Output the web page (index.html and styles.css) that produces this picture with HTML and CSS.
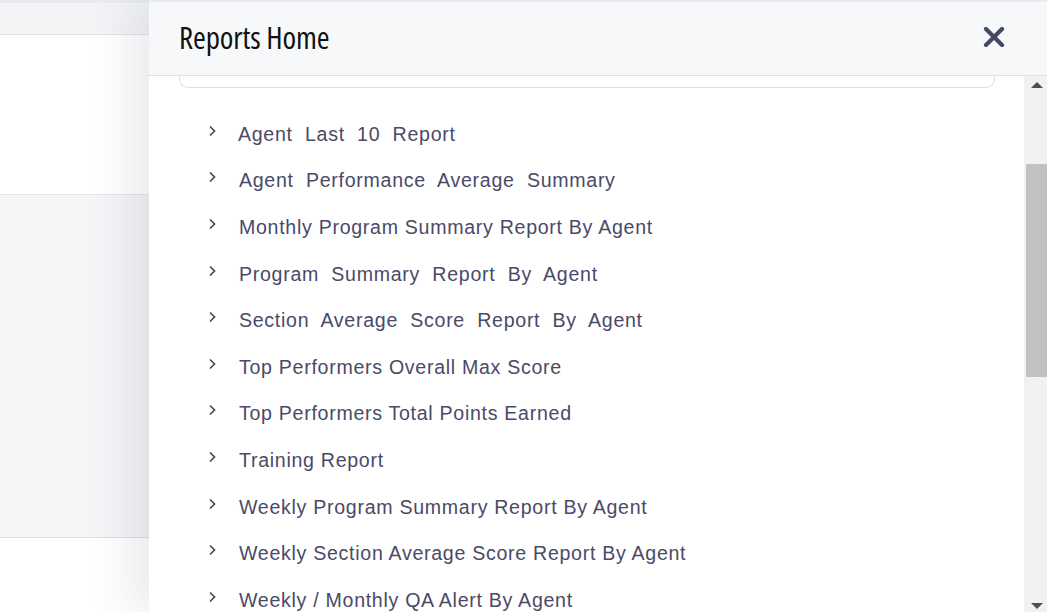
FILE: index.html
```html
<!DOCTYPE html>
<html>
<head>
<meta charset="utf-8">
<link rel="stylesheet" href="styles.css">
</head>
<body>
<div class="page">
  <div class="page-top"></div>
  <div class="page-card"></div>
  <div class="page-band"></div>
  <div class="page-foot"></div>
</div>
<div class="drawer">
  <div class="drawer-strip"></div>
  <div class="drawer-header">
    <h1 class="drawer-title">Reports Home</h1>
    <svg class="close" width="22" height="20" viewBox="0 0 22 20"><path d="M3 2 L19 18 M19 2 L3 18" stroke="#474766" stroke-width="4.2" stroke-linecap="round"/></svg>
  </div>
  <div class="drawer-body">
    <div class="content">
      <div class="card-edge"></div>
      <ul class="report-list">
        <li><svg class="chev" viewBox="0 0 9 12"><path d="M2 1.5 L6.5 6 L2 10.5" fill="none" stroke="#4a4a4a" stroke-width="1.7"/></svg><span class="label tight">Agent&nbsp; Last&nbsp; 10&nbsp; Report</span></li>
        <li><svg class="chev" viewBox="0 0 9 12"><path d="M2 1.5 L6.5 6 L2 10.5" fill="none" stroke="#4a4a4a" stroke-width="1.7"/></svg><span class="label">Agent&nbsp; Performance&nbsp; Average&nbsp; Summary</span></li>
        <li><svg class="chev" viewBox="0 0 9 12"><path d="M2 1.5 L6.5 6 L2 10.5" fill="none" stroke="#4a4a4a" stroke-width="1.7"/></svg><span class="label">Monthly Program Summary Report By Agent</span></li>
        <li><svg class="chev" viewBox="0 0 9 12"><path d="M2 1.5 L6.5 6 L2 10.5" fill="none" stroke="#4a4a4a" stroke-width="1.7"/></svg><span class="label">Program&nbsp; Summary&nbsp; Report&nbsp; By&nbsp; Agent</span></li>
        <li><svg class="chev" viewBox="0 0 9 12"><path d="M2 1.5 L6.5 6 L2 10.5" fill="none" stroke="#4a4a4a" stroke-width="1.7"/></svg><span class="label">Section&nbsp; Average&nbsp; Score&nbsp; Report&nbsp; By&nbsp; Agent</span></li>
        <li><svg class="chev" viewBox="0 0 9 12"><path d="M2 1.5 L6.5 6 L2 10.5" fill="none" stroke="#4a4a4a" stroke-width="1.7"/></svg><span class="label">Top Performers Overall Max Score</span></li>
        <li><svg class="chev" viewBox="0 0 9 12"><path d="M2 1.5 L6.5 6 L2 10.5" fill="none" stroke="#4a4a4a" stroke-width="1.7"/></svg><span class="label">Top Performers Total Points Earned</span></li>
        <li><svg class="chev" viewBox="0 0 9 12"><path d="M2 1.5 L6.5 6 L2 10.5" fill="none" stroke="#4a4a4a" stroke-width="1.7"/></svg><span class="label">Training Report</span></li>
        <li><svg class="chev" viewBox="0 0 9 12"><path d="M2 1.5 L6.5 6 L2 10.5" fill="none" stroke="#4a4a4a" stroke-width="1.7"/></svg><span class="label">Weekly Program Summary Report By Agent</span></li>
        <li><svg class="chev" viewBox="0 0 9 12"><path d="M2 1.5 L6.5 6 L2 10.5" fill="none" stroke="#4a4a4a" stroke-width="1.7"/></svg><span class="label">Weekly Section Average Score Report By Agent</span></li>
        <li><svg class="chev" viewBox="0 0 9 12"><path d="M2 1.5 L6.5 6 L2 10.5" fill="none" stroke="#4a4a4a" stroke-width="1.7"/></svg><span class="label">Weekly / Monthly QA Alert By Agent</span></li>
      </ul>
    </div>
    <div class="scrollbar">
      <div class="sb-arrow up"></div>
      <div class="sb-track">
        <div class="sb-gap-top"></div>
        <div class="sb-thumb"></div>
      </div>
      <div class="sb-arrow down"></div>
    </div>
  </div>
</div>
</body>
</html>
```

FILE: styles.css
```css
* { box-sizing: border-box; }
html, body { margin: 0; padding: 0; }
body {
  width: 1047px;
  height: 612px;
  overflow: hidden;
  display: flex;
  background: #f4f5f7;
  font-family: "Liberation Sans", Arial, sans-serif;
}
.page {
  width: 149px;
  flex: none;
  display: flex;
  flex-direction: column;
  background: #f4f5f7;
}
.page-top {
  height: 35px;
  background: #f3f4f6;
  border-bottom: 1px solid #e1e4e8;
  border-top: 3px solid #e9ebee;
}
.page-card {
  height: 160px;
  background: #fff;
  border-bottom: 1px solid #e3e5e8;
}
.page-band {
  height: 343px;
  background: #f4f5f7;
  border-bottom: 1px solid #dadde1;
}
.page-foot {
  flex: 1;
  background: #fff;
}
.drawer {
  flex: 1;
  display: flex;
  flex-direction: column;
  background: #fff;
  box-shadow: -20px 0 40px rgba(60, 70, 90, 0.11);
  position: relative;
}
.drawer-strip {
  height: 2px;
  background: #e9ebee;
}
.drawer-header {
  height: 74px;
  background: #f7f8fa;
  border-bottom: 1px solid #dde0e4;
  display: flex;
  align-items: center;
  justify-content: space-between;
  padding: 0 42px 0 30px;
}
.drawer-title {
  margin: 0;
  font-family: "Open Sans", sans-serif;
  font-stretch: 75%;
  font-weight: 400;
  font-size: 31px;
  color: #111;
  letter-spacing: -0.1px;
  display: inline-block;
  margin-top: -4px;
}
.close { display: block; margin-top: -3px; }
.drawer-body {
  flex: 1;
  display: flex;
  min-height: 0;
}
.content {
  flex: 1;
  padding: 0 29px 0 30px;
}
.card-edge {
  height: 12px;
  border: 1px solid #dcdfe3;
  border-top: none;
  border-radius: 0 0 9px 9px;
}
.report-list {
  list-style: none;
  margin: 0;
  padding: 23px 0 0 29px;
}
.report-list li {
  height: 46.6px;
  display: flex;
  align-items: center;
  color: #4a4a68;
  font-size: 19.6px;
  letter-spacing: 0.7px;
  white-space: nowrap;
}
.chev {
  width: 9px;
  height: 12px;
  flex: none;
  margin: -7px 22px 0 0;
}
.label.tight { margin-left: -1px; }
.scrollbar {
  width: 23px;
  flex: none;
  background: #f1f1f1;
  display: flex;
  flex-direction: column;
}
.sb-arrow {
  height: 18px;
  flex: none;
  display: flex;
  justify-content: center;
  align-items: center;
}
.sb-arrow.up::before {
  content: "";
  border-left: 6px solid transparent;
  border-right: 6px solid transparent;
  border-bottom: 6px solid #505050;
  margin-left: 3px;
}
.sb-arrow.down::before {
  content: "";
  border-left: 6px solid transparent;
  border-right: 6px solid transparent;
  border-top: 6px solid #505050;
  margin-left: 3px;
  margin-top: 6px;
}
.sb-track {
  flex: 1;
  padding-left: 2px;
}
.sb-gap-top { height: 70px; }
.sb-thumb {
  height: 213px;
  background: #c1c1c1;
}
```
